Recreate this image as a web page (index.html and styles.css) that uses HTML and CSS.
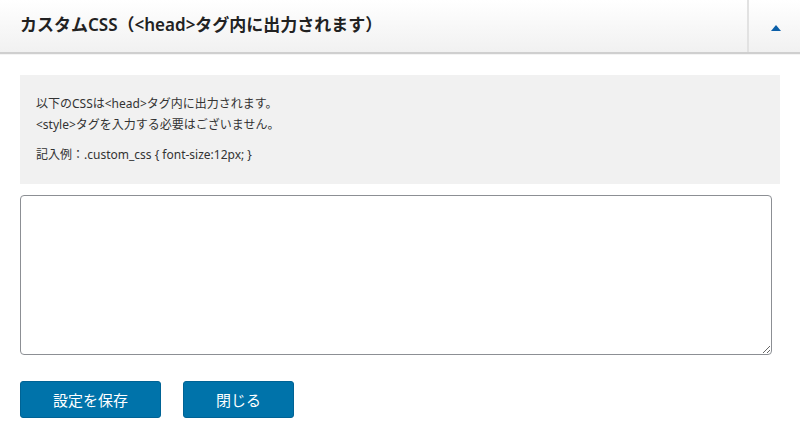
FILE: index.html
```html
<!DOCTYPE html>
<html lang="ja">

<head>
    <meta charset="UTF-8">
    <meta name="viewport" content="width=device-width, initial-scale=1.0">
    <title>カスタムCSS</title>
    <link rel="stylesheet" href="styles.css">
</head>

<body>
    <div class="panel">
        <div class="panel-header">
            <h2 class="panel-title">カスタムCSS（&lt;head&gt;タグ内に出力されます）</h2>
            <button class="panel-toggle" type="button" aria-label="閉じる">
                <span class="toggle-arrow"></span>
            </button>
        </div>
        <div class="panel-body">
            <div class="note">
                <p>以下のCSSは&lt;head&gt;タグ内に出力されます。<br>&lt;style&gt;タグを入力する必要はございません。</p>
                <p>記入例：.custom_css { font-size:12px; }</p>
            </div>
            <textarea class="css-input"></textarea>
            <div class="actions">
                <button class="btn" type="button">設定を保存</button>
                <button class="btn" type="button">閉じる</button>
            </div>
        </div>
    </div>
</body>

</html>
```

FILE: styles.css
```css
body {
    margin: 0;
    font-family: "Noto Sans", "Noto Sans CJK JP", sans-serif;
    background-color: #fff;
    color: #333;
}

.panel-header {
    display: flex;
    align-items: stretch;
    height: 52px;
    background: linear-gradient(#fff, #f1f1f1);
    border-bottom: 2px solid #cfcfcf;
    box-shadow: 0 1px 0 #f4f4f4;
}

.panel-title {
    flex-grow: 1;
    margin: 0;
    padding: 0 20px;
    font-size: 17px;
    font-weight: 600;
    line-height: 50px;
    color: #222;
}

.panel-toggle {
    width: 53px;
    padding: 0;
    background: none;
    border: none;
    border-left: 2px solid #e2e2e2;
    cursor: pointer;
}

.toggle-arrow {
    display: inline-block;
    width: 0;
    height: 0;
    border-left: 5px solid transparent;
    border-right: 5px solid transparent;
    border-bottom: 6px solid #0b5fa8;
    margin-left: 2px;
}

.panel-body {
    padding: 21px 20px 20px;
}

.note {
    background-color: #f1f1f1;
    padding: 18px 16px 19px;
    font-size: 12px;
    line-height: 21px;
    color: #333;
}

.note p {
    margin: 0;
}

.note p + p {
    margin-top: 9px;
}

.css-input {
    display: block;
    box-sizing: border-box;
    width: 99%;
    height: 160px;
    margin-top: 11px;
    border: 1px solid #8c8f94;
    border-radius: 4px;
    font-family: "Liberation Mono", monospace;
}

.actions {
    display: flex;
    gap: 22px;
    margin-top: 26px;
}

.btn {
    height: 37px;
    padding: 0 32px;
    font-family: "Noto Sans", "Noto Sans CJK JP", sans-serif;
    font-size: 15px;
    color: #fff;
    background-color: #0073aa;
    border: 1px solid #006395;
    border-radius: 3px;
    cursor: pointer;
}
```
